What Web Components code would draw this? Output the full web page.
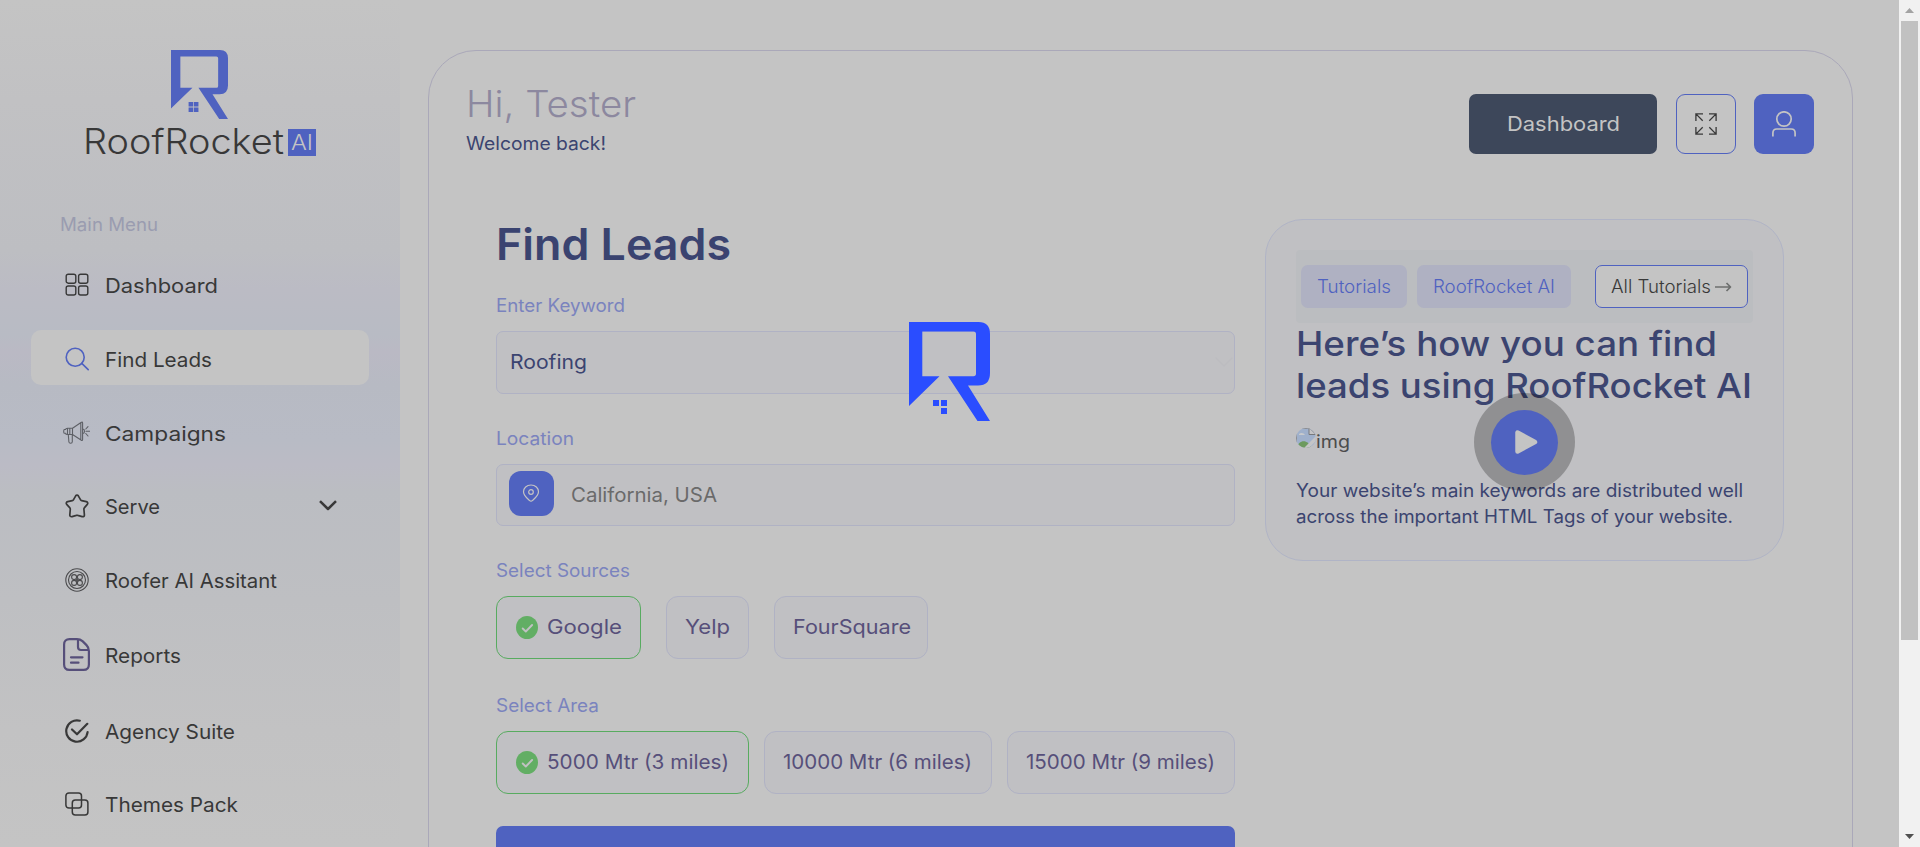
<!DOCTYPE html>
<html lang="en">
<head>
<meta charset="utf-8">
<title>RoofRocket AI</title>
<style>
html,body{margin:0;height:847px;overflow:hidden;background:#c4c4c4;font-family:Inter,"Open Sans",sans-serif;font-size:20px;color:#383838}
</style>
</head>
<body>
<rr-app></rr-app>
<script>
const make=(name,html,setup)=>customElements.define(name,class extends HTMLElement{
  connectedCallback(){
    if(this.shadowRoot)return;
    const t=document.createElement('template');
    t.innerHTML=typeof html==='function'?html(this):html;
    this.attachShadow({mode:'open'}).appendChild(t.content.cloneNode(true));
    if(setup)setup(this);
  }
});

const ICONS={
dashboard:['0 0 24 24',24,24,'<g stroke-width="1.4"><rect x="1.2" y="1.2" width="9.6" height="9" rx="2"/><rect x="13.6" y="1.2" width="9.2" height="9" rx="2"/><rect x="1.2" y="13" width="9.6" height="9" rx="2"/><rect x="13.6" y="13" width="9.2" height="9" rx="2"/></g>'],
search:['0 0 24 24',24,24,'<g stroke="#4f62c0" stroke-width="1.6"><circle cx="10.2" cy="10.2" r="9"/><path d="M16.8 16.4l6.4 6.2"/></g>'],
campaign:['0 0 27 24',27,24,'<g stroke="#5e6066" stroke-width="1.1"><path d="M4.500 7.200h5l8.500-5.700c1-.7 1.600-.5 1.600.5v16.500c0 1.100-.7 1.200-1.600.5L9.500 13.500h-5zM9.500 7.200v6.300M6.800 7.200v6.300M17.800 2v16.500M4.500 7.200c-1.500 0-1.900.8-1.900 1.300H1.300C.5 8.800.5 12 1.300 12.200h1.300c0 .8.600 1.300 1.900 1.300M5.300 13.700l.6 7.300c.3 1.700 3.300 1.700 3.400-.3V14M20 8c2 .2 2 4.300 0 4.500M22.800 8l2.200-2.400M23 10.300h3.800M22.800 12.500L25 15"/></g>'],
serve:['0 0 24 24',24,24,'<path stroke-width="1.700" d="M10.700 1.800c.6-1 2-1 2.600 0l2.300 4.100c.2.400.6.700 1.100.8l4.600 1c1.400.3 1.900 1.700 1 2.700l-3 3.500c-.3.400-.5.800-.4 1.300l.5 5.800c.1 1.300-1.100 2-2.300 1.600l-4.300-1.200c-.5-.2-1-.2-1.500 0l-4.200 1.200c-1.300.5-2.400-.4-2.300-1.600l.5-5.800c0-.5-.1-.9-.4-1.300l-3.200-3.500c-.9-1-.4-2.400 1-2.700l4.600-1c.5-.1.900-.4 1.100-.8z"/>'],
assistant:['0 0 24 24',24,24,'<g stroke-width="1.100" stroke="#4b4b4d"><circle cx="12" cy="12" r="11.200"/><circle cx="12" cy="12" r="8.500"/><circle cx="9.100" cy="9.100" r="2.500"/><circle cx="14.900" cy="9.100" r="2.500"/><circle cx="9.100" cy="14.900" r="2.500"/><circle cx="14.900" cy="14.900" r="2.500"/><circle cx="12" cy="12" r="1"/></g>'],
reports:['0 0 27 33',27,33,'<g stroke="#564f7a" stroke-width="2.200"><path d="M6.500 1.100h7.500c2.500 0 4 .7 5.500 2l4 4c1.800 1.800 2.400 3.500 2.400 6v13.300c0 3.500-2 5.500-5.400 5.500h-14c-3.400 0-5.400-2-5.400-5.500v-20c0-3.300 2-5.300 5.400-5.300zM15 1.500V9c0 2 1 3 3 3h7.500M8 19.300h11.500M8 24.700h7.500"/></g>'],
agency:['0 0 24 24',24,24,'<g stroke-width="2.200"><path d="M14.800 1.700A10.700 10.700 0 1 0 22.600 13M7 10.500l5 4.800L22.300 4.800"/></g>'],
themes:['0 0 24 24',24,24,'<g stroke-width="1.500"><rect x=".9" y=".9" width="15.600" height="15.200" rx="3"/><rect x="7.300" y="8" width="15.600" height="15" rx="3"/></g>'],
chevron:['0 0 18 11',18,11,'<path stroke-width="2.500" stroke-linecap="butt" d="M1 1.200l8 7.800 8-7.800"/>'],
expand:['0 0 22 22',22,22,'<path stroke-width="1.300" stroke-linecap="butt" stroke-linejoin="miter" d="M8 .9H.9V8M.9.900l6.800 6.800M14 .9h7.100V8M21.100.9l-6.800 6.800M8 21.100H.9V14M.9 21.100l6.800-6.800M14 21.100h7.100V14M21.100 21.100l-6.800-6.800"/>'],
user:['0 0 24 26',24,26,'<g stroke="#c4c4c4" stroke-width="1.700" stroke-linecap="butt"><circle cx="12" cy="8" r="7.200"/><path d="M.9 25.500v-3.400c0-2.900 1.600-4.100 3.900-4.100h14.400c2.300 0 3.900 1.200 3.900 4.100v3.400"/></g>'],
pin:['0 0 18 18',18,18,'<g stroke="#c4c4c4" stroke-width="1.200"><path d="M9 1c4.400 0 7.500 3 7.500 6.800 0 4-4 6.700-5.900 8.600-1 1-2.200 1-3.200 0C5.500 14.500 1.500 11.800 1.500 7.800 1.500 4 4.600 1 9 1z"/><circle cx="9" cy="8" r="2.300"/></g>'],
check:['0 0 22 23',22,23,'<ellipse cx="11" cy="11.500" rx="11" ry="11.500" fill="#62ae64" stroke="none"/><path stroke="#c1c1c3" stroke-width="1.900" d="M6.700 12.500l3.100 3 6.300-6.500"/>'],
arrow:['0 0 17 12',17,12,'<path stroke="#6d6f6e" stroke-width="1.700" stroke-linecap="butt" d="M0 6h15.500M11.500 2l4 4-4 4"/>'],
broken:['0 0 20 20',20,20,'<defs><clipPath id="c"><circle cx="10" cy="10" r="10"/></clipPath></defs><g clip-path="url(#c)" stroke="none"><path d="M0 0h14l6 6v14H0z" fill="#9fb0cb"/><path d="M3 6c2-2 5-1 6 1H3z" fill="#c8cacd"/><path d="M1 20c1-8 11-10 14 0z" fill="#6c9a5e"/><path d="M20 8L8 20h5l7-7z" fill="#c4c4c6"/><path d="M13 0v6.500h7" fill="#c4c4c6" stroke="#77797c"/><path d="M.5 20V.5H14l5.500 5.500" fill="none" stroke="#8a8c90"/></g>'],
ghost:['0 0 18 10',18,10,'<path stroke="#bcbcc0" stroke-width="1.400" d="M1 1l8 8 8-8"/>']
};
make('rr-icon',el=>{const[b,w,h,p]=ICONS[el.getAttribute('name')];return `<style>:host{display:block;flex:none;width:${w}px;height:${h}px}svg{display:block}</style><svg viewBox="${b}" width="${w}" height="${h}" fill="none" stroke="#383838" stroke-linecap="round" stroke-linejoin="round">${p}</svg>`});

make('rr-mark',el=>`<style>:host{display:block}svg{display:block;width:100%;height:100%}</style>
<svg viewBox="0 0 81 99" preserveAspectRatio="none" fill="${el.getAttribute('fill')}"><path d="M0 0H69.500Q81 0 81 12V51Q81 63.500 69 63.500H59L81 99H68.500L39 54.300H64.500Q67 54.300 67 51.500V12Q67 9.500 64.500 9.500H13.300V54.300H30.500L0 84z"/>${el.hasAttribute('full')?'<path d="M25 74.500h6.500v6.500H25zM32.500 74.500H39v6.500h-6.500zM25 82.500h6.500v6.500H25zM32.500 82.500H39v6.500h-6.500z"/>':'<path d="M24 78h6v6h-6zM32 78h6v6h-6zM32 86h6v6h-6z"/>'}</svg>`);

make('rr-logo',`<style>:host{display:flex;flex-direction:column;align-items:center;padding:50px 2px 0 0}
rr-mark{width:57px;height:69px;margin-left:1px}
.w{display:flex;align-items:center;gap:4px;height:28px;margin-top:8px;font-size:35px;font-weight:300;line-height:28px;width:233px}
.b{width:28px;height:27px;background:#4f62c0;color:#c4c4c4;font-size:22px;font-weight:300;display:flex;align-items:center;justify-content:center;line-height:26px;margin-top:2px}</style>
<rr-mark full fill="#4f62c0"></rr-mark><div class="w"><rr-text w="201">RoofRocket</rr-text><span class="b"><rr-text w="22">AI</rr-text></span></div>`);

make('rr-nav-item',el=>`<style>:host{display:block;height:55px}
div{box-sizing:border-box;height:55px;margin:0 31px;border-radius:10px;padding:4px 32px 0 31px;display:flex;align-items:center}
:host([active]) div{background:#c4c4c4}
.i{width:29px;display:flex;justify-content:center;flex:none;margin-right:14px;margin-top:-2px}rr-text{flex:none}
.c{margin-left:auto;margin-right:0;margin-top:-2px}</style>
<div><span class="i"><rr-icon name="${el.getAttribute('icon')}"></rr-icon></span><rr-text w="${el.getAttribute('w')}"><slot></slot></rr-text>${el.hasAttribute('more')?'<rr-icon class="c" name="chevron"></rr-icon>':''}</div>`);

make('rr-sidebar',`<style>:host{display:block;width:400px;height:847px;flex:none;overflow:hidden;background:linear-gradient(#c4c4c4,#c1c1c3 100px,#bdbec2 250px,#bbbbc4 290px,#b8bbc4 335px,#bab9c4 352px,#b7bac3 385px,#b8bbc5 440px,#bbbbc5 465px,#bbbdc2 492px,#bebfc2 600px,#c2c2c3 730px,#c4c4c4 847px)}
.m{padding-left:60px;margin-top:57px;height:25px;line-height:25px;font-size:18px;font-weight:400;color:#9a9cb0;margin-bottom:19px}
nav{display:flex;flex-direction:column}</style>
<rr-logo></rr-logo><div class="m"><rr-text w="98">Main Menu</rr-text></div>
<nav><rr-nav-item icon="dashboard" w="113">Dashboard</rr-nav-item>
<rr-nav-item active icon="search" w="107" style="margin-top:19px">Find Leads</rr-nav-item>
<rr-nav-item icon="campaign" w="121" style="margin-top:19px">Campaigns</rr-nav-item>
<rr-nav-item icon="serve" more w="55" style="margin-top:18px">Serve</rr-nav-item>
<rr-nav-item icon="assistant" w="172" style="margin-top:19px">Roofer AI Assitant</rr-nav-item>
<rr-nav-item icon="reports" w="76" style="margin-top:20px">Reports</rr-nav-item>
<rr-nav-item icon="agency" w="130" style="margin-top:21px">Agency Suite</rr-nav-item>
<rr-nav-item icon="themes" w="133" style="margin-top:18px">Themes Pack</rr-nav-item></nav>`);

make('rr-header',`<style>:host{display:flex;justify-content:space-between;height:72px;padding:32px 38px 0 37px}
.hi{font-size:37px;font-weight:300;line-height:41px;height:41px;color:#8c889f}
.wb{font-size:18px;line-height:24px;height:24px;margin-top:8px;color:#3b4470}
.r{display:flex;padding-top:11px}
.b{box-sizing:border-box;height:60px;width:60px;border-radius:9px;display:flex;align-items:center;justify-content:center}
.d{width:188px;background:#3d475a;color:#c4c4c4;border-radius:7px;margin-right:19px}
.e{border:1px solid #4f62c0;margin-right:18px}.e rr-icon{margin:-1px 1px 0 0}.u{background:#4f62c0}</style>
<div><div class="hi"><rr-text w="170">Hi, Tester</rr-text></div><div class="wb"><rr-text w="140">Welcome back!</rr-text></div></div>
<div class="r"><div class="b d"><rr-text w="113">Dashboard</rr-text></div><div class="b e"><rr-icon name="expand"></rr-icon></div><div class="b u"><rr-icon name="user"></rr-icon></div></div>`);

make('rr-label',el=>`<style>:host{display:block;font-size:18px;line-height:25px;height:25px;margin-bottom:13px;color:#7a83be}</style><rr-text w="${el.getAttribute('w')}"><slot></slot></rr-text>`);

make('rr-field',`<style>:host{box-sizing:border-box;display:flex;align-items:center;height:63px;border:1px solid #b0b2c4;border-radius:7px;background:#c0c0c3;color:#3b4470;padding:0 1px 1px 13px}
:host([loc]){height:62px;padding-left:12px;color:#6a6a6a}
.p{width:45px;height:45px;border-radius:12px;background:#4f62c0;display:flex;align-items:center;justify-content:center;margin-right:17px;margin-top:-2px}.p rr-icon{margin-right:1px;margin-top:-1px}
:host(:not([loc])) .p{display:none}:host([loc]) .g{display:none}.g{margin-left:auto}</style><span class="p"><rr-icon name="pin"></rr-icon></span><slot></slot><rr-icon class="g" name="ghost"></rr-icon>`);

make('rr-chip',el=>`<style>:host{box-sizing:border-box;display:flex;align-items:center;height:63px;border:1px solid #b0b2c4;border-radius:12px;background:#c0c0c3;color:#564f7a;padding:0 0 1px 18px}
:host([on]){border-color:#58ab60;padding-left:19px}rr-icon{margin-right:9px;margin-top:1px}</style>${el.hasAttribute('on')?'<rr-icon name="check"></rr-icon>':''}<rr-text w="${el.getAttribute('w')}"><slot></slot></rr-text>`);

make('rr-form',`<style>:host{display:block;width:739px;flex:none}
h1{margin:0 0 24px 0;font-size:43.500px;line-height:50px;height:50px;font-weight:600;color:#3a4370}
.row{display:flex;gap:25px}.row.a{gap:15px}
.go{height:60px;background:#4f62c0;border-radius:7px;margin-top:32px}</style>
<h1><rr-text w="235">Find Leads</rr-text></h1>
<rr-label w="129">Enter Keyword</rr-label><rr-field><rr-text w="77">Roofing</rr-text></rr-field>
<rr-label w="78" style="margin-top:32px">Location</rr-label><rr-field loc><rr-text w="146">California, USA</rr-text></rr-field>
<rr-label w="134" style="margin-top:32px">Select Sources</rr-label>
<div class="row"><rr-chip on w="75" style="width:145px">Google</rr-chip><rr-chip w="45" style="width:83px">Yelp</rr-chip><rr-chip w="118" style="width:154px">FourSquare</rr-chip></div>
<rr-label w="103" style="margin-top:34px">Select Area</rr-label>
<div class="row a"><rr-chip on w="182" style="width:253px">5000 Mtr (3 miles)</rr-chip><rr-chip w="189" style="width:228px">10000 Mtr (6 miles)</rr-chip><rr-chip w="189" style="width:228px">15000 Mtr (9 miles)</rr-chip></div>
<div class="go"></div>`);

make('rr-tutorial',`<style>:host{box-sizing:border-box;display:block;position:relative;width:519px;height:342px;margin-left:30px;flex:none;border:1px solid #b0b4c6;border-radius:38px;background:#c0c0c3;padding:30px 30px 0;color:#3b4470}
.s{box-sizing:border-box;height:73px;background:#bbbdc0;border-radius:4px;display:flex;align-items:center;padding:0 5px;font-size:18px;font-weight:300}
.t{box-sizing:border-box;height:43px;border-radius:7px;background:#afb1c2;color:#4f62c0;padding:0 16px 1px;display:flex;align-items:center;margin-right:10px}
.a{margin:0 0 0 auto;background:#c4c4c4;border:1px solid #4f62c0;color:#383838;gap:4px;padding:0 15px}.a rr-icon{margin-top:1px}
.h{font-size:34px;font-weight:500;line-height:42px;height:42px}
.i{display:flex;align-items:center;height:24px;margin-top:22px;line-height:22px;font-size:18px;color:#4c4c4d}.i rr-icon{margin-top:-7px}.i rr-text{margin-top:2px}
.p{font-size:18px;line-height:26px;height:52px;margin-top:25px}
.play{position:absolute;left:208px;top:173px;width:101px;height:98px;border-radius:50%;background:rgba(0,0,0,.25);display:flex;align-items:center;justify-content:center}
.in{width:67px;height:65px;border-radius:50%;background:#4f62c0;display:flex;align-items:center;justify-content:center}</style>
<div class="s"><span class="t"><rr-text w="74">Tutorials</rr-text></span><span class="t"><rr-text w="122">RoofRocket AI</rr-text></span><span class="t a"><rr-text w="100">All Tutorials</rr-text><rr-icon name="arrow"></rr-icon></span></div>
<div class="h"><rr-text w="421">Here’s how you can find</rr-text></div><div class="h"><rr-text w="456">leads using RoofRocket AI</rr-text></div>
<div class="i"><rr-icon name="broken"></rr-icon><rr-text w="34">img</rr-text></div>
<div class="p"><rr-text w="447">Your website’s main keywords are distributed well</rr-text><br><rr-text w="437">across the important HTML Tags of your website.</rr-text></div>
<div class="play"><div class="in"><svg width="24" height="26" viewBox="0 0 24 26" style="margin-left:3px"><path d="M3.500 3.500v19L21 13z" fill="#c4c4c4" stroke="#c4c4c4" stroke-width="4.500" stroke-linejoin="round"/></svg></div></div>`);

make('rr-panel',`<style>:host{box-sizing:border-box;display:block;width:1425px;height:900px;margin:50px 46px 0 28px;flex:none;border:1px solid #aaa8b9;border-radius:48px}
.c{display:flex;padding:64px 0 0 67px;align-items:flex-start}</style><rr-header></rr-header><div class="c"><rr-form></rr-form><rr-tutorial></rr-tutorial></div>`);

make('rr-scrollbar',`<style>:host{box-sizing:border-box;display:flex;flex-direction:column;align-items:center;width:21px;height:847px;background:#f1f1f1;flex:none}
.t{width:17px;height:619px;background:#c1c1c1}.g{height:21px;display:flex;align-items:center;justify-content:center}.g svg{display:block}.s{flex:1}</style>
<div class="g"><svg width="9" height="5"><path d="M4.500 0L9 5H0z" fill="#a3a3a3"/></svg></div><div class="t"></div><div class="s"></div><div class="g"><svg width="9" height="5"><path d="M0 0h9L4.500 5z" fill="#505050"/></svg></div>`);

make('rr-app',`<style>:host{display:flex;width:1920px;height:847px;overflow:hidden;position:relative}
.l{position:absolute;left:909px;top:322px;width:81px;height:99px}</style>
<rr-sidebar></rr-sidebar><rr-panel></rr-panel><rr-scrollbar></rr-scrollbar><rr-mark class="l" fill="#2a4dff"></rr-mark>`);

/* A single line of text, widened to fill the width in its "w" attribute. */
make('rr-text','<style>:host{display:inline-block;white-space:nowrap;transform-origin:0 50%}</style><slot></slot>',el=>{
  const w=+el.getAttribute('w'),now=el.getBoundingClientRect().width;
  el.style.width=now+'px';
  el.style.flex='none';
  el.style.marginRight=(w-now)+'px';
  el.style.transform=`scaleX(${(w/now).toFixed(4)})`;
});
</script>
</body>
</html>
